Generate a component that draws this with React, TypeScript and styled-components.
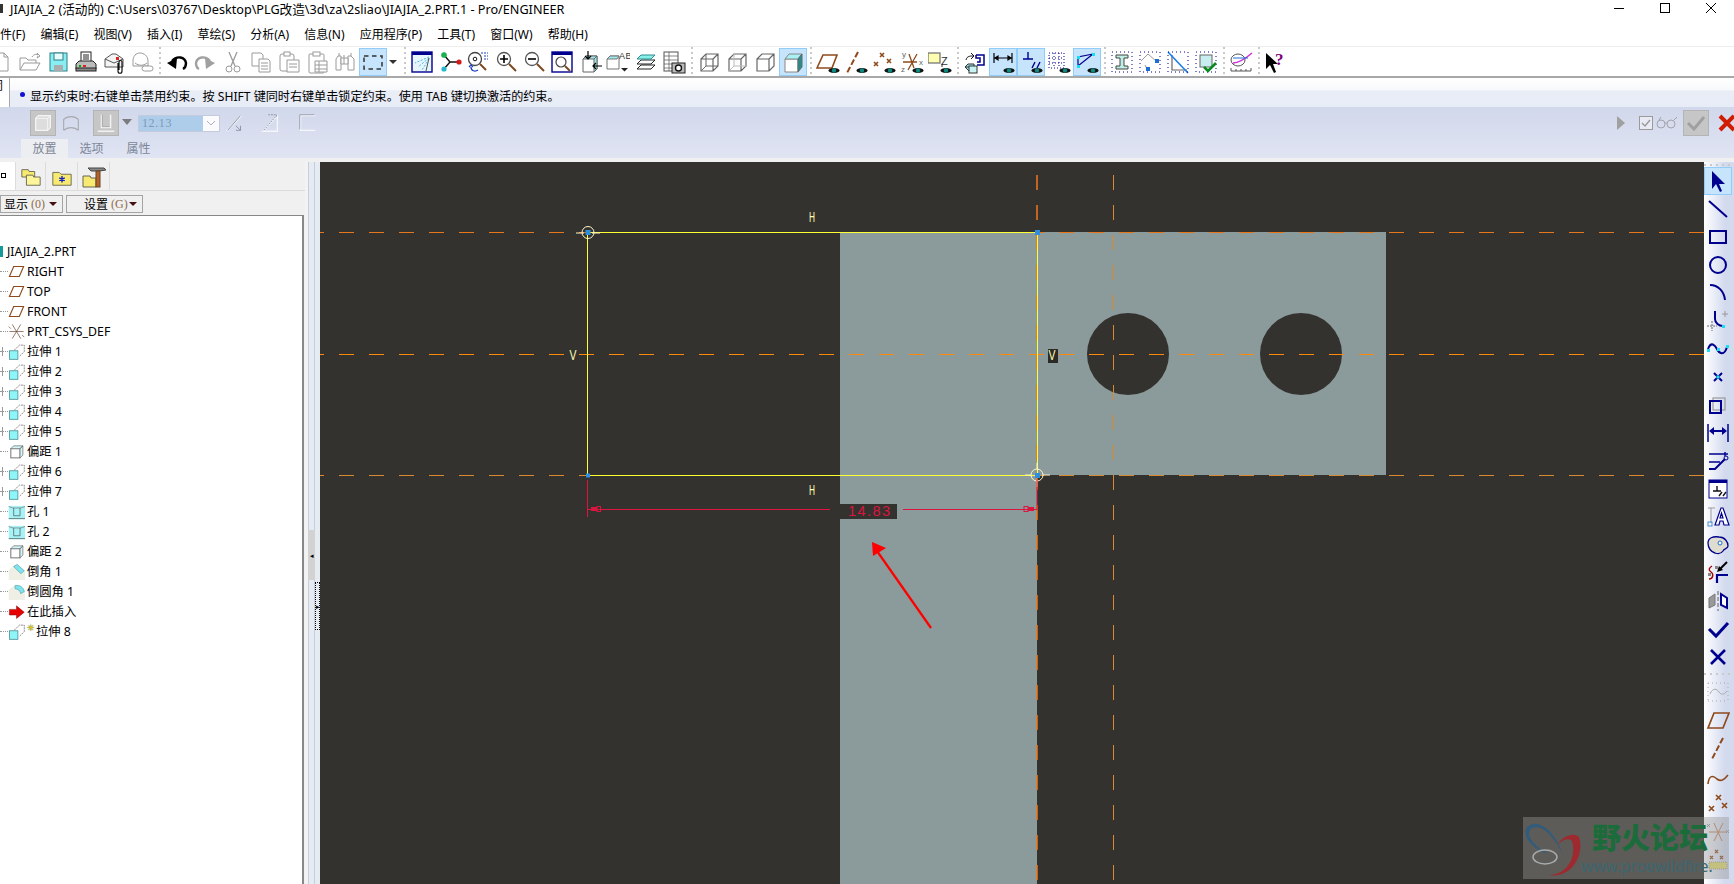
import React from 'react';
import styled, { createGlobalStyle } from 'styled-components';

const GlobalStyle = createGlobalStyle`
  html, body, #root {
    margin: 0;
    padding: 0;
    height: 100%;
    overflow: hidden;
    background: #fff;
  }
  * { box-sizing: border-box; }
`;

const FONT = `"Noto Sans", "Noto Sans CJK SC", sans-serif`;

const Root = styled.div`
  position: relative;
  display: flex;
  flex-direction: column;
  width: 100vw;
  height: 100vh;
  overflow: hidden;
  font-family: ${FONT};
  font-size: 12px;
  color: #000;
`;

const TitleBar = styled.div`
  display: flex;
  align-items: center;
  height: 24px;
  padding: 0 0 8px 10px;
  flex: none;
`;
const TitleMark = styled.span`
  width: 3px;
  height: 9px;
  margin-left: -10px;
  margin-right: 7px;
  background: #333;
`;
const TitleText = styled.span`
  font-size: 12.65px;
  white-space: nowrap;
`;
const WindowButtons = styled.div`
  display: flex;
  margin-left: auto;
`;
const WindowButton = styled.div`
  display: flex;
  align-items: center;
  justify-content: center;
  width: 46px;
  height: 16px;
`;

const MenuBar = styled.div`
  display: flex;
  align-items: center;
  gap: 15.1px;
  height: 22px;
  margin-left: -12px;
  padding-bottom: 2px;
  flex: none;
`;
const MenuItem = styled.span`
  white-space: nowrap;
`;

const ToolBar = styled.div`
  display: flex;
  align-items: center;
  height: 32px;
  border-top: 1px solid #eee;
  border-bottom: 2px solid #a8a8a8;
  flex: none;
  overflow: hidden;
`;
const ToolRow = styled.div`
  display: flex;
  align-items: center;
  margin-left: -12px;
`;
const ToolButton = styled.div<{ $active?: boolean }>`
  display: flex;
  align-items: center;
  justify-content: center;
  width: 28px;
  height: 28px;
  flex: none;
  background: ${(p) => (p.$active ? '#c6e4fc' : 'transparent')};
  box-shadow: ${(p) => (p.$active ? 'inset 0 0 0 1px #92ccf8' : 'none')};
`;
const ToolCaret = styled.div`
  width: 0;
  height: 0;
  border: 4px solid transparent;
  border-top: 4px solid #333;
  border-bottom: none;
  flex: none;
`;
const CaretGap = styled.div`
  display: flex;
  justify-content: center;
  width: 11px;
  margin-right: 3px;
  flex: none;
`;
const Grip = styled.div`
  width: 7px;
  height: 29px;
  flex: none;
  background: repeating-linear-gradient(to bottom, #c9c9c9 0 2px, transparent 2px 5px) center / 2px 100% no-repeat;
`;

const MessageBar = styled.div`
  display: flex;
  align-items: center;
  height: 29px;
  flex: none;
  background: linear-gradient(to bottom, #fff 0%, #f8f9fc 40%, #e9edf6 45%, #e8ecf6 100%);
`;
const MessageStub = styled.div`
  width: 10px;
  height: 100%;
  border-right: 1px solid #a8a8a8;
  background: #fff;
  overflow: hidden;
  line-height: 16px;
  text-indent: -9px;
  flex: none;
`;
const MessageDot = styled.span`
  width: 5px;
  height: 5px;
  margin: 3px 5px 0 10px;
  border-radius: 50%;
  background: #1010d0;
  flex: none;
`;
const MessageText = styled.span`
  font-size: 12.1px;
  white-space: nowrap;
  position: relative;
  top: 3px;
`;

const Dashboard = styled.div`
  height: 51px;
  padding-top: 3px;
  flex: none;
  background: linear-gradient(to bottom, #d1d8eb, #e0e4f3);
`;
const DashRow = styled.div`
  display: flex;
  align-items: center;
  height: 26px;
  padding-left: 30px;
`;
const DashButton = styled.div<{ $pressed?: boolean; $ml?: number }>`
  display: flex;
  align-items: center;
  justify-content: center;
  width: 26px;
  height: 26px;
  margin-left: ${(p) => p.$ml ?? 0}px;
  flex: none;
  background: ${(p) => (p.$pressed ? '#c6c6c6' : 'transparent')};
  box-shadow: ${(p) => (p.$pressed ? 'inset 0 0 0 1px #b4b4b4' : 'none')};
`;
const DashCaret = styled.div`
  width: 0;
  height: 0;
  margin: 0 6px 0 3px;
  border: 5px solid transparent;
  border-top: 6px solid #7c7c80;
  border-bottom: none;
  flex: none;
  position: relative;
  top: -1px;
`;
const ValueBox = styled.div`
  display: flex;
  align-items: center;
  width: 82px;
  height: 17px;
  background: #aecdea;
  border: 1px solid #c4cbdc;
  flex: none;
`;
const ValueText = styled.span`
  flex: 1;
  padding-left: 3px;
  font-family: "Liberation Serif", serif;
  font-size: 12px;
  letter-spacing: 0.6px;
  color: #7d9ab8;
`;
const ValueDrop = styled.div`
  display: flex;
  align-items: center;
  justify-content: center;
  width: 16px;
  height: 100%;
  background: #fbfbfd;
`;
const DashRight = styled.div`
  display: flex;
  align-items: center;
  margin-left: auto;
`;
const DashGlyph = styled.svg<{ $ml?: number; $mr?: number }>`
  margin-left: ${(p) => p.$ml ?? 0}px;
  margin-right: ${(p) => p.$mr ?? 0}px;
  flex: none;
`;
const TabRow = styled.div`
  display: flex;
  height: 19px;
  margin-top: 3px;
  padding-left: 21px;
`;
const Tab = styled.div<{ $active?: boolean }>`
  width: 47px;
  line-height: 19px;
  text-align: center;
  color: #7c8797;
  background: ${(p) => (p.$active ? '#eceef1' : 'transparent')};
`;
const Spacer = styled.div`
  height: 4px;
  flex: none;
  background: #f0f0f0;
`;

const Main = styled.div`
  display: flex;
  flex: 1;
  min-height: 0;
`;

const Sidebar = styled.div`
  display: flex;
  flex-direction: column;
  width: 305px;
  flex: none;
  background: #f0f0f0;
`;
const SideTabs = styled.div`
  display: flex;
  height: 29px;
  flex: none;
  border-bottom: 1px solid #dcdcdc;
`;
const SideTab = styled.div<{ $active?: boolean; $w: number }>`
  display: flex;
  align-items: flex-end;
  justify-content: center;
  width: ${(p) => p.$w}px;
  padding-bottom: 2px;
  background: ${(p) => (p.$active ? '#fff' : 'transparent')};
  border-right: 1px solid #dcdcdc;
`;
const ActiveMark = styled.span`
  width: 5px;
  height: 5px;
  margin: 0 0 10px -8px;
  border: 1px solid #000;
  background: #fff;
`;
const SideButtons = styled.div`
  display: flex;
  gap: 3px;
  height: 24px;
  padding-top: 4px;
  flex: none;
`;
const SideButton = styled.div<{ $w: number }>`
  display: flex;
  align-items: center;
  width: ${(p) => p.$w}px;
  height: 18px;
  padding: 0 0 0 3px;
  background: #f0f0f0;
  border: 1px solid #a4a4a4;
  white-space: nowrap;
`;
const ButtonLabel = styled.span`
  margin-left: 14px;
`;
const ButtonHint = styled.span`
  margin-left: 3px;
  font-family: "Liberation Serif", serif;
  color: #8d6b4a;
`;
const ButtonCaret = styled.span`
  margin-left: auto;
  margin-right: 5px;
  border: 4px solid transparent;
  border-top: 4px solid #401010;
  border-bottom: none;
`;
const TreeBox = styled.div`
  flex: 1;
  min-height: 0;
  padding-top: 25px;
  margin-right: 1px;
  font-size: 12.3px;
  background: #fff;
  border-top: 1px solid #888;
  border-right: 2px solid #888;
`;
const TreeRow = styled.div`
  display: flex;
  align-items: center;
  height: 20px;
`;
const TreeStem = styled.span<{ $tick?: boolean }>`
  position: relative;
  width: 8px;
  height: 1px;
  flex: none;
  border-top: 1px dotted #999;
  &::before {
    content: '';
    display: ${(p) => (p.$tick ? 'block' : 'none')};
    position: absolute;
    left: 0;
    top: -5px;
    width: 2px;
    height: 9px;
    border-right: 1px solid #999;
  }
`;
const TreeIcon = styled.span`
  display: flex;
  justify-content: center;
  width: 17px;
  margin-right: 2px;
  flex: none;
`;
const RootIcon = styled.span`
  width: 3px;
  height: 11px;
  margin-right: 4px;
  background: #159a9c;
  flex: none;
`;
const NewStar = styled.span`
  margin: -7px 1px 0 0;
  font-size: 9px;
  line-height: 9px;
  color: #f0e000;
  text-shadow: 0 0 1px #000;
`;

const Sash = styled.div`
  position: relative;
  width: 15px;
  flex: none;
  background: linear-gradient(to right, #f3f3f3 0 3px, #c3cfde 3px 4px, #e6ebf2 4px 9px, #c3cfde 9px 10px, #e6ebf2 10px 15px);
`;
const SashHandle = styled.div`
  position: absolute;
  top: 368px;
  left: 3px;
  display: flex;
  align-items: center;
  justify-content: center;
  width: 7px;
  height: 50px;
  background: #d2d2d2;
  font-size: 7px;
`;
const SashDots = styled.div`
  position: absolute;
  top: 420px;
  left: 10px;
  display: flex;
  align-items: center;
  justify-content: center;
  width: 5px;
  height: 48px;
  border: 1px dotted #000;
  font-size: 7px;
`;

const Canvas = styled.div`
  flex: 1;
  min-width: 0;
  background: #34322e;
  overflow: hidden;
`;
const CanvasSvg = styled.svg`
  display: block;
  width: 100%;
  height: 100%;
`;

const RightTools = styled.div`
  display: flex;
  flex-direction: column;
  width: 30px;
  flex: none;
  overflow: hidden;
  background: linear-gradient(to right, #fff, #d3daee 70%);
`;
const HGrip = styled.div<{ $h: number }>`
  height: ${(p) => p.$h}px;
  flex: none;
  background: repeating-linear-gradient(to right, #c9c9c9 0 2px, transparent 2px 6px) 0 2px / 100% 2px no-repeat;
`;
const RightButton = styled(ToolButton)`
  flex: none;
`;

const Watermark = styled.div`
  position: absolute;
  right: 5px;
  bottom: 5px;
  width: 206px;
  height: 62px;
  background: rgba(150, 150, 150, 0.42);
  overflow: hidden;
`;
const MarkLogo = styled.svg`
  position: absolute;
  left: 0;
  top: 0;
`;
const MarkName = styled.div`
  position: absolute;
  left: 69px;
  top: 2px;
  font-family: "Noto Sans CJK SC", sans-serif;
  font-size: 29px;
  line-height: 35px;
  font-weight: 900;
  white-space: nowrap;
  color: #1b6c3a;
`;
const MarkUrl = styled.div`
  position: absolute;
  left: 58px;
  top: 38px;
  font-size: 15.5px;
  line-height: 22px;
  white-space: nowrap;
  color: #3c666e;
`;

const Ico = ({ children, size = 24 }: { children: React.ReactNode; size?: number }) => (
  <svg width={size} height={size} viewBox="0 0 24 24" fill="none">
    {children}
  </svg>
);

const Eye = () => (
  <g>
    <ellipse cx="18" cy="20.5" rx="5.5" ry="2.6" fill="#111" />
    <circle cx="18" cy="20.5" r="2.2" fill="#0f8a80" />
  </g>
);

const Mag = ({ sign }: { sign?: string }) => (
  <g>
    <circle cx="10" cy="9" r="6.5" fill="#fff" stroke="#555" strokeWidth="1.3" />
    {sign && <path d={sign} stroke="#000" strokeWidth="1.6" />}
    <path d="M15 14l7 7" stroke="#7a4a20" strokeWidth="2" />
  </g>
);

const gray = '#9a9a9a';
const navy = '#00008f';
const brown = '#8e4a1c';

const icons: Record<string, React.ReactNode> = {
  newDoc: <path d="M6 3h8l4 4v14H6zM14 3v4h4" stroke={gray} fill="#fff" />,
  open: (
    <g stroke={gray} fill="#fff">
      <path d="M2 20V8h6l2 2h8v3" />
      <path d="M2 20l4-7h16l-4 7z" />
      <path d="M14 7c2-3 4-3 6-2l-1-2 3 3-3 2 1-2" />
    </g>
  ),
  save: (
    <g>
      <rect x="4" y="3" width="17" height="18" fill="#88eef2" stroke="#2a7f86" />
      <rect x="8" y="3" width="9" height="7" fill="#e8fbfb" stroke="#2a7f86" />
      <rect x="8" y="15" width="9" height="6" fill="#a9adad" />
    </g>
  ),
  print: (
    <g stroke="#222">
      <rect x="7" y="2" width="10" height="10" fill="#fff" />
      <path d="M9 5h6M9 7h6M9 9h6" />
      <path d="M2 19v-5l3-3h14l3 3v5z" fill="#bbb" />
      <rect x="2" y="18" width="20" height="3" fill="#888" />
      <rect x="5" y="15" width="2" height="2" fill="#0a0" stroke="none" />
      <rect x="9" y="15" width="3" height="2" fill="#d22" stroke="none" />
    </g>
  ),
  mail: (
    <g>
      <path d="M3 9l7-5h4l7 5v8H3z" fill="#f4f4f4" stroke="#555" />
      <path d="M3 9l9 4 9-4" stroke="#555" />
      <rect x="14" y="7" width="3" height="3" fill="#d22" />
      <path d="M16 13v8c0 3 4 3 4 0v-9c0-2-3-2-3 0v8" stroke="#111" strokeWidth="1.2" />
    </g>
  ),
  mailOff: (
    <g stroke={gray} fill="#fff">
      <path d="M3 11c0-5 3-8 7-8s8 3 8 8v5H3z" />
      <path d="M5 13c4 3 8 3 12 0" />
      <rect x="12" y="16" width="11" height="5" rx="2.5" />
    </g>
  ),
  undo: (
    <g>
      <path d="M7 11c5-6 13-4 14 2 0 3-1 5-3 6" stroke="#000" strokeWidth="2.4" />
      <path d="M2 13l10-5-1 11z" fill="#000" />
    </g>
  ),
  redo: (
    <g>
      <path d="M17 11c-5-6-13-4-14 2 0 3 1 5 3 6" stroke="#a0a0a0" strokeWidth="2.4" />
      <path d="M22 13l-10-5 1 11z" fill="#a0a0a0" />
    </g>
  ),
  cut: (
    <g stroke={gray}>
      <path d="M8 2l6 14M16 2l-6 14" strokeWidth="1.3" />
      <circle cx="8" cy="19" r="3" />
      <circle cx="16" cy="19" r="3" />
    </g>
  ),
  copy: (
    <g stroke={gray} fill="#fff">
      <path d="M3 3h9l2 2v11H3z" />
      <path d="M10 9h9l2 2v11H10z" />
      <path d="M12 13h7M12 16h7M12 19h7" />
    </g>
  ),
  paste: (
    <g stroke={gray} fill="#fff">
      <rect x="3" y="4" width="14" height="17" rx="2" />
      <rect x="7" y="2" width="6" height="4" />
      <path d="M10 10h12v12H10zM12 14h8M12 17h8" />
    </g>
  ),
  pasteSpecial: (
    <g stroke={gray} fill="#fff">
      <rect x="4" y="4" width="15" height="19" rx="1" />
      <rect x="8" y="2" width="7" height="4" />
      <path d="M10 11h12v11H10zM14 11v11M10 15h12M10 19h12" />
    </g>
  ),
  binoc: (
    <g stroke={gray} fill="#fff">
      <path d="M3 20V9l2-3h3v14zM15 20V6h3l3 3v11z" />
      <path d="M8 8h7v6H8zM6 3v3M18 3v3M11 5v9" />
    </g>
  ),
  select: <rect x="3" y="6" width="18" height="13" stroke="#333" strokeWidth="1.5" strokeDasharray="4.5 3.5" />,
  sketchView: (
    <g>
      <rect x="2" y="2" width="20" height="20" fill="#e6f6fb" stroke={navy} strokeWidth="1.4" />
      <rect x="2" y="2" width="20" height="3" fill={navy} />
      <path d="M19 7L5 13M19 8L8 17M19 9L12 20" stroke="#4db4e8" strokeDasharray="2 1.5" />
      <path d="M19 8l-3 13" stroke="#555" />
    </g>
  ),
  spin: (
    <g>
      <path d="M12 12L6 5M12 12h9M12 12l-6 7" stroke="#111" strokeWidth="1.4" />
      <circle cx="6" cy="5" r="2.6" fill="#1fb14a" stroke="#0a5" strokeWidth=".5" />
      <circle cx="21" cy="12" r="2.6" fill="#d51a1a" />
      <circle cx="6" cy="19" r="2.6" fill="#26b9cc" />
    </g>
  ),
  zoomBox: (
    <g>
      <circle cx="9" cy="9" r="6.5" fill="#fff" stroke="#444" strokeWidth="1.3" />
      <circle cx="9" cy="9" r="1.8" stroke="#111" />
      <path d="M14 14l6 6" stroke="#7a4a20" strokeWidth="2" />
      <path d="M15 3h7M18 6h4M18 9h4" stroke="#1a3fc0" strokeDasharray="2 1" />
      <path d="M5 17c0 4 4 5 7 3M3 17l2-2 2 2" stroke="#1a3fc0" strokeWidth="1.3" />
    </g>
  ),
  zoomIn: <Mag sign="M6 9h8M10 5v8" />,
  zoomOut: <Mag sign="M6 9h8" />,
  refit: (
    <g>
      <rect x="2" y="2" width="20" height="20" fill="#fff" stroke={navy} strokeWidth="1.4" />
      <rect x="2" y="2" width="20" height="3" fill={navy} />
      <circle cx="11" cy="12" r="5" stroke="#444" strokeWidth="1.2" />
      <path d="M15 16l5 5" stroke="#7a4a20" strokeWidth="2" />
    </g>
  ),
  reorient: (
    <g>
      <path d="M5 9l3-3h11v13l-3 3H5z" fill="#fff" stroke="#666" />
      <path d="M16 9l3-3v13l-3 3zM5 9l3-3h11l-3 3z" fill="#9ee8ee" stroke="#666" />
      <path d="M10 1v8M7 6l3 3 3-3M24 16h-9M18 13l-3 3 3 3" stroke="#000" strokeWidth="1.2" />
    </g>
  ),
  named: (
    <g>
      <path d="M1 9l3-3h9v13H1z" fill="#fff" stroke="#777" />
      <path d="M1 9l3-3h9l-2 3z" fill="#9ee8ee" stroke="#777" />
      <text x="13" y="9" fontFamily="Liberation Sans" fontSize="9" fill="#333" letterSpacing="0.5">AB</text>
      <path d="M15 18h7l-3.5 3.5z" fill="#222" />
    </g>
  ),
  layers: (
    <g stroke="#222">
      <path d="M3 19l4-4h14l-4 4z" fill="#fff" />
      <path d="M3 14l4-4h14l-4 4z" fill="#fff" />
      <path d="M3 9l4-4h14l-4 4z" fill="#88f0e8" stroke="#2a8f90" />
    </g>
  ),
  table: (
    <g stroke="#555">
      <rect x="2" y="2" width="14" height="19" fill="#fff" />
      <path d="M2 6h14M2 10h14M2 14h14M2 18h14M7 2v19" strokeWidth=".7" />
      <rect x="10" y="13" width="13" height="10" fill="#bbb" stroke="#222" />
      <circle cx="16.5" cy="18" r="3" fill="#fff" stroke="#111" strokeWidth="1.4" />
    </g>
  ),
  wire: (
    <g stroke="#666">
      <path d="M4 9l5-5h12v12l-5 5H4zM4 9h12v12M16 9l5-5" strokeWidth="1.2" />
      <path d="M9 4v12H21M9 16l-5 5" strokeWidth="1" />
    </g>
  ),
  wireThin: (
    <g stroke="#666">
      <path d="M4 9l5-5h12v12l-5 5H4zM4 9h12v12M16 9l5-5" strokeWidth="1.2" />
      <path d="M9 4v12H21M9 16l-5 5" stroke="#bbb" strokeWidth="1" />
    </g>
  ),
  hidden: <path d="M4 9l5-5h12v12l-5 5H4zM4 9h12v12M16 9l5-5" stroke="#666" strokeWidth="1.2" />,
  shaded: (
    <g>
      <path d="M4 9h13v13H4z" fill="#fff" stroke="#888" />
      <path d="M4 9l4-5h13l-4 5z" fill="#a8f2f5" stroke="#888" />
      <path d="M17 9l4-5v13l-4 5z" fill="#23908f" stroke="#666" />
    </g>
  ),
  planeEye: (
    <g>
      <path d="M1 18L7 5h14l-5 13z" stroke={brown} strokeWidth="1.6" />
      <Eye />
    </g>
  ),
  axisEye: (
    <g>
      <path d="M14 2L3 23" stroke={brown} strokeWidth="2" strokeDasharray="6 2.5" />
      <Eye />
    </g>
  ),
  pointsEye: (
    <g>
      <path d="M8 3l4 4M12 3L8 7M2 12l4 4M6 12l-4 4M15 9l4 4M19 9l-4 4" stroke={brown} strokeWidth="1.6" />
      <Eye />
    </g>
  ),
  csysEye: (
    <g>
      <path d="M3 12h14M8 20L17 4M9 4l5 14" stroke={brown} strokeWidth="1.3" />
      <text x="2" y="7" fontFamily="Liberation Sans" fontSize="8" fill="#666">y</text>
      <text x="19" y="15" fontFamily="Liberation Sans" fontSize="8" fill="#666">x</text>
      <text x="1" y="22" fontFamily="Liberation Sans" fontSize="8" fill="#666">z</text>
      <Eye />
    </g>
  ),
  noteEye: (
    <g>
      <rect x="0" y="3" width="12" height="10" fill="#ffffb0" stroke="#777" strokeWidth="1.3" />
      <text x="13" y="15" fontFamily="Liberation Sans" fontSize="11" fill="#333">Z</text>
      <path d="M14 14v3" stroke="#333" />
      <Eye />
    </g>
  ),
  relate: (
    <g>
      <path d="M2 17h6l5 5H7zM2 17l3-3h6v8" fill="#9ee8ee" stroke="#333" />
      <rect x="6" y="16" width="8" height="7" fill="#c7f3f5" stroke="#333" />
      <path d="M13 5h8v10h-7M13 5v3h4v4h-3" stroke={navy} strokeWidth="1.5" />
      <path d="M3 10c1-4 4-4 7-4M8 3l3 3-3 3" stroke="#111" />
    </g>
  ),
  dimEye: (
    <g>
      <path d="M3 3v10M21 3v10M4 8h16M4 8l3-2v4zM20 8l-3-2v4z" stroke="#000" strokeWidth="1.2" />
      <Eye />
    </g>
  ),
  constrEye: (
    <g>
      <path d="M4 9h10M9 2v7" stroke={navy} strokeWidth="1.4" />
      <path d="M13 18l3-6M18 18l3-6" stroke={navy} strokeWidth="1.4" />
      <Eye />
    </g>
  ),
  gridEye: (
    <g>
      <rect x="2" y="3" width="15" height="15" stroke={navy} strokeDasharray="1 2" />
      <path d="M7 3v15M12 3v15M2 8h15M2 13h15" stroke={navy} strokeDasharray="1 2" />
      <Eye />
    </g>
  ),
  verticesEye: (
    <g>
      <path d="M3 16V7l15-3z" stroke={navy} strokeWidth="1.2" />
      <path d="M2 6h3v3H2zM17 3h3v3h-3zM2 15h3v3H2z" fill="#19e0f0" />
      <Eye />
    </g>
  ),
  ibeam: (
    <g>
      <path d="M6 5h12v3h-4v8h4v3H6v-3h4V8H6z" fill="#bfeee5" stroke="#444" />
      <rect x="2" y="2" width="20" height="20" stroke={navy} strokeDasharray="1 3" />
    </g>
  ),
  rhomb: (
    <g>
      <path d="M3 11l7-7 8 7M7 15l3 6" stroke={gray} />
      <rect x="2" y="2" width="20" height="20" stroke={navy} strokeDasharray="1 3" />
      <rect x="17" y="9" width="4" height="4" fill="#1a6fd0" />
      <rect x="8" y="17" width="4" height="4" fill="#1a6fd0" />
    </g>
  ),
  slash: (
    <g>
      <path d="M6 5v15h15" stroke="#666" strokeWidth="1.2" />
      <path d="M2 2l20 21" stroke="#1a7fe8" strokeWidth="1.6" />
      <rect x="2" y="2" width="20" height="20" stroke={navy} strokeDasharray="1 3" />
    </g>
  ),
  cubeCheck: (
    <g>
      <rect x="6" y="5" width="12" height="12" fill="#c9eef2" stroke="#666" />
      <rect x="2" y="2" width="20" height="20" stroke={navy} strokeDasharray="1 3" />
      <path d="M10 17l4 4 8-8" stroke="#0a8a20" strokeWidth="2.6" />
    </g>
  ),
  analysis: (
    <g>
      <ellipse cx="9" cy="10" rx="7" ry="6" stroke="#555" />
      <path d="M4 13c6 0 12-4 19-10" stroke="#d030d8" strokeWidth="1.5" />
      <path d="M4 8h15" stroke="#1a6fd0" />
      <path d="M2 21h20v-3M2 21v-3M7 21v-2M12 21v-2M17 21v-2" stroke="#555" />
    </g>
  ),
  help: (
    <g>
      <path d="M2 3v16l4-4 4 8 2-1-3-8h5z" fill="#000" />
      <text x="11" y="15" fontFamily="Liberation Serif" fontWeight="700" fontSize="17" fill="#80007f">?</text>
    </g>
  ),
  arrow: <path d="M6 2v18l4-5 4 8 2-1-3-7h6z" fill={navy} />,
  line: <path d="M3 4l18 16" stroke={navy} strokeWidth="2" />,
  rect: <rect x="4" y="6" width="16" height="12" stroke={navy} strokeWidth="2" />,
  circle: <circle cx="12" cy="12" r="8" stroke={navy} strokeWidth="2" />,
  arc: <path d="M4 4c8 0 14 6 15 15" stroke={navy} strokeWidth="2" />,
  fillet: (
    <g>
      <path d="M9 2v8c0 4 4 7 8 7" stroke={navy} strokeWidth="2" />
      <rect x="16" y="16" width="3" height="3" fill="#19e0f0" />
      <path d="M19 2v6M16 5h6" stroke={gray} />
      <path d="M6 12v10M1 17h10" stroke={gray} strokeDasharray="2 1" strokeWidth="1.6" />
    </g>
  ),
  spline: (
    <g>
      <path d="M2 12c3-8 7-4 9 0s7 8 10-2" stroke={navy} strokeWidth="2" />
      <path d="M1 12h3v3H1zM11 11h3v3h-3zM20 8h3v3h-3z" fill="#19e0f0" />
    </g>
  ),
  point: (
    <g>
      <path d="M8 8l8 8M16 8l-8 8" stroke={navy} strokeWidth="2" />
      <rect x="10.5" y="10.5" width="3" height="3" fill="#19e0f0" />
    </g>
  ),
  offset: (
    <g>
      <rect x="7" y="5" width="12" height="12" stroke={gray} strokeWidth="1.2" />
      <path d="M4 8h11v12H4z" stroke={navy} strokeWidth="2" />
    </g>
  ),
  dim: (
    <g>
      <path d="M2 3v18M22 3v18" stroke={navy} strokeWidth="1.5" />
      <path d="M5 10h14" stroke={navy} strokeWidth="2" />
      <path d="M3 10l5-4v8zM21 10l-5-4v8z" fill={navy} />
    </g>
  ),
  modify: (
    <g>
      <path d="M3 5h19M3 13h11M19 3v4" stroke={navy} strokeWidth="1.4" />
      <path d="M3 20h6l10-10" stroke={navy} strokeWidth="2" />
      <circle cx="20" cy="9" r="2" stroke={navy} />
    </g>
  ),
  constr: (
    <g>
      <rect x="3" y="3" width="18" height="18" fill="#fff" stroke={navy} />
      <rect x="3" y="3" width="18" height="3" fill={navy} />
      <path d="M7 14h8M11 9v5M13 19l3-4M17 19l3-4" stroke="#111" strokeWidth="1.4" />
    </g>
  ),
  textA: (
    <g>
      <path d="M2 3h7M5 3v15" stroke={gray} />
      <path d="M9 20L15 3h2l6 17h-5l-1-4h-3l-1 4zM14 13h3l-1.5-5z" fill="#fff" stroke={navy} strokeWidth="1.2" />
      <rect x="2" y="17" width="4" height="4" stroke="#4a90d0" />
    </g>
  ),
  palette: (
    <g>
      <path d="M2 10c0-5 5-7 11-6 6 0 9 5 9 9 0 3-4 2-5 5-2 3-5 3-8 2-4-1-7-5-7-10z" fill="#dfdcd0" stroke={navy} strokeWidth="1.3" />
      <circle cx="14" cy="10" r="2" fill="#fff" stroke="#1a6fd0" />
    </g>
  ),
  trim: (
    <g>
      <path d="M6 5c-3 2-4 4-1 6s2 7-2 7" stroke="#a00" strokeWidth="1.4" />
      <rect x="9" y="5" width="3" height="3" fill="#888" />
      <rect x="2" y="12" width="3" height="3" fill="#888" />
      <path d="M11 22V14h11" stroke={navy} strokeWidth="2.2" />
      <path d="M21 1l-7 7" stroke="#000" strokeWidth="2" />
      <path d="M11 11l2-6 4 4z" fill="#000" />
    </g>
  ),
  mirror: (
    <g>
      <path d="M12 2v20" stroke="#777" strokeWidth="1.2" strokeDasharray="4 2" />
      <path d="M9 5L3 9v10l6-3z" fill="#999" stroke="#777" />
      <path d="M15 5l6 4v10l-6-3z" fill="#fff" stroke={navy} strokeWidth="2" />
    </g>
  ),
  ok: <path d="M3 12l7 7L22 6" stroke={navy} strokeWidth="3" />,
  cancel: <path d="M5 5l14 14M19 5L5 19" stroke={navy} strokeWidth="2.6" />,
  dtm: (
    <g stroke="#aaa">
      <path d="M2 3h20M2 21h20M2 3v18M22 3v18" strokeDasharray="1 3" />
      <path d="M4 14c3-7 7-5 9-2s5 3 8-1" />
    </g>
  ),
  plane: <path d="M2 20L8 5h15l-6 15z" stroke={brown} strokeWidth="1.7" />,
  axis: <path d="M17 2L6 23" stroke={brown} strokeWidth="2" strokeDasharray="6 2.5" />,
  curve: <path d="M2 20c1-9 5-9 9-5 4 3 7 1 11-4" stroke={brown} strokeWidth="1.6" />,
  points: <path d="M10 3l5 5M15 3l-5 5M3 14l5 5M8 14l-5 5M16 11l5 5M21 11l-5 5" stroke={brown} strokeWidth="1.6" />,
  csys: (
    <g>
      <path d="M3 12h18M8 21L17 3M8 3l8 18" stroke="#c4865c" />
      <path d="M1 4l3 3M4 4L1 7M20 10l3 3M23 10l-3 3" stroke={gray} />
    </g>
  ),
  ptsPlane: (
    <g>
      <rect x="3" y="14" width="18" height="7" fill="#e6e070" stroke="#999" strokeDasharray="1 1" />
      <path d="M9 2l3 3M12 2L9 5M4 8l3 3M7 8l-3 3M14 8l3 3M17 8l-3 3" stroke={brown} strokeWidth="1.3" />
    </g>
  ),
};

// tree icons
const TreeGlyph: Record<string, React.ReactNode> = {
  plane: <path d="M2 19L8 5h14l-6 14z" stroke={brown} strokeWidth="1.6" />,
  csys: <path d="M2 12h20M6 22L18 2M6 2l12 20M1 5l3 3M20 17l3 3" stroke="#6e4a34" strokeWidth="1" />,
  extrude: (
    <g>
      <path d="M9 10l7-7h7v9l-7 7" stroke="#666" strokeDasharray="3 1" />
      <rect x="2" y="11" width="12" height="12" fill="#8ef5f8" stroke="#3f7f86" />
    </g>
  ),
  offset: (
    <g stroke="#6a6a6a">
      <rect x="4" y="8" width="13" height="13" fill="#fff" strokeWidth="1.3" />
      <path d="M4 8l4-4h13l-4 4zM17 8l4-4v13l-4 4z" fill="#d3f5f7" />
    </g>
  ),
  hole: (
    <g>
      <rect x="1" y="4" width="23" height="19" fill="#a5f3f7" />
      <path d="M1 5l6 2h11l6-2" stroke="#777" />
      <path d="M8 7v11h9V7M1 22h23" stroke="#555" />
    </g>
  ),
  chamfer: (
    <g>
      <path d="M1 10L10 2l5 2 9 8v12H1z" fill="#efefe6" />
      <path d="M8 5l5-3 10 9-5 4z" fill="#7fe3f0" stroke="#5aa" />
    </g>
  ),
  round: (
    <g>
      <path d="M1 10L10 2l5 2 9 8v12H1z" fill="#efefe6" />
      <path d="M10 4c6-2 12 2 13 8l-5 3C17 11 14 8 10 8z" fill="#7fe3f0" stroke="#5aa" />
    </g>
  ),
  insert: <path d="M2 9h10V4l11 9-11 9v-5H2z" fill="#e80000" stroke="#600" strokeWidth=".6" />,
};

const toolGroups: { name: string; active?: boolean }[][] = [
  [{ name: 'newDoc' }, { name: 'open' }, { name: 'save' }, { name: 'print' }, { name: 'mail' }, { name: 'mailOff' }],
  [
    { name: 'undo' }, { name: 'redo' }, { name: 'cut' }, { name: 'copy' }, { name: 'paste' },
    { name: 'pasteSpecial' }, { name: 'binoc' }, { name: 'select', active: true },
  ],
  [
    { name: 'sketchView' }, { name: 'spin' }, { name: 'zoomBox' }, { name: 'zoomIn' }, { name: 'zoomOut' },
    { name: 'refit' }, { name: 'reorient' }, { name: 'named' }, { name: 'layers' }, { name: 'table' },
  ],
  [{ name: 'wire' }, { name: 'wireThin' }, { name: 'hidden' }, { name: 'shaded', active: true }],
  [{ name: 'planeEye' }, { name: 'axisEye' }, { name: 'pointsEye' }, { name: 'csysEye' }, { name: 'noteEye' }],
  [
    { name: 'relate' }, { name: 'dimEye', active: true }, { name: 'constrEye', active: true },
    { name: 'gridEye' }, { name: 'verticesEye', active: true },
  ],
  [{ name: 'ibeam' }, { name: 'rhomb' }, { name: 'slash' }, { name: 'cubeCheck' }],
  [{ name: 'analysis' }],
  [{ name: 'help' }],
];

const menus = ['文件(F)', '编辑(E)', '视图(V)', '插入(I)', '草绘(S)', '分析(A)', '信息(N)', '应用程序(P)', '工具(T)', '窗口(W)', '帮助(H)'];

const sketchTools = [
  'arrow', 'line', 'rect', 'circle', 'arc', 'fillet', 'spline', 'point', 'offset',
  'dim', 'modify', 'constr', 'textA', 'palette', 'trim', 'mirror', 'ok', 'cancel',
];
const datumTools = ['dtm', 'plane', 'axis', 'curve', 'points', 'csys', 'ptsPlane'];

const tree: { icon: string; label: string; isNew?: boolean; tick?: boolean }[] = [
  { icon: 'plane', label: 'RIGHT' },
  { icon: 'plane', label: 'TOP' },
  { icon: 'plane', label: 'FRONT' },
  { icon: 'csys', label: 'PRT_CSYS_DEF' },
  { icon: 'extrude', label: '拉伸 1', tick: true },
  { icon: 'extrude', label: '拉伸 2', tick: true },
  { icon: 'extrude', label: '拉伸 3', tick: true },
  { icon: 'extrude', label: '拉伸 4', tick: true },
  { icon: 'extrude', label: '拉伸 5', tick: true },
  { icon: 'offset', label: '偏距 1' },
  { icon: 'extrude', label: '拉伸 6', tick: true },
  { icon: 'extrude', label: '拉伸 7', tick: true },
  { icon: 'hole', label: '孔 1' },
  { icon: 'hole', label: '孔 2' },
  { icon: 'offset', label: '偏距 2' },
  { icon: 'chamfer', label: '倒角 1' },
  { icon: 'round', label: '倒圆角 1' },
  { icon: 'insert', label: '在此插入' },
  { icon: 'extrude', label: '拉伸 8', isNew: true },
];

const ORANGE = '#ff8a0a';
const YELLOW = '#ffff33';
const LABEL = '#ffffb4';
const DIM = '#dc1440';

const SketchView = () => (
  // page coordinates, so the drawing reads the same as the screenshot
  <CanvasSvg viewBox="320 162 1384 722" preserveAspectRatio="xMinYMin slice">
    <rect x="840" y="232" width="546" height="243" fill="#8b9a9a" />
    <rect x="840" y="475" width="197" height="409" fill="#8b9a9a" />
    <circle cx="1128" cy="354" r="41" fill="#34322e" />
    <circle cx="1301" cy="354" r="41" fill="#34322e" />

    <g stroke={ORANGE} strokeWidth="1" strokeDasharray="15 15" strokeDashoffset="11">
      <path d="M320 232.5H1704" stroke="#e8761a" />
      <path d="M320 354.5H1704" />
      <path d="M320 475.5H1704" stroke="#d98a30" />
    </g>
    <g stroke={ORANGE} strokeWidth="1" strokeDasharray="15 15" strokeDashoffset="17">
      <path d="M1037 162V884" stroke="#f0781e" strokeWidth="1.5" />
      <path d="M1113.5 162V884" stroke="#d98a30" />
    </g>

    <rect x="1048" y="349" width="10" height="14" fill="#2c2a27" />
    <g fontFamily="Liberation Sans, sans-serif" fontSize="15" fill={LABEL} textAnchor="middle">
      <text x="812" y="222" textLength="6" lengthAdjust="spacingAndGlyphs">H</text>
      <text x="812" y="495" textLength="6" lengthAdjust="spacingAndGlyphs">H</text>
      <text x="573" y="360" textLength="7" lengthAdjust="spacingAndGlyphs">V</text>
      <text x="1052" y="360" textLength="7" lengthAdjust="spacingAndGlyphs">V</text>
    </g>

    <path d="M587.5 232.5H1037.5V475.5H587.5Z" stroke={YELLOW} strokeWidth="1" fill="none" />
    <g stroke="#fff8c8" strokeWidth="1" fill="none">
      <circle cx="588" cy="232.5" r="6" />
      <circle cx="1037" cy="475" r="6" />
      <path d="M576 233H584M592 233H600M1025 475H1031M1043 475H1050M1037 463V469M1037 481V487" />
    </g>
    <g fill="#2e8fe0">
      <rect x="585.5" y="230" width="5" height="5" />
      <rect x="1035" y="230" width="5" height="5" />
      <rect x="586" y="473.5" width="4" height="4" />
      <rect x="1035" y="473" width="5" height="5" />
    </g>

    <g stroke={DIM} strokeWidth="1" fill="none">
      <path d="M587.5 480V517M1037 480V510" />
      <path d="M588 509.5H830M903 509.5H1037" />
      <rect x="597" y="506.5" width="3.5" height="5" />
      <rect x="1024" y="506.5" width="4" height="5" />
    </g>
    <rect x="591" y="507" width="6" height="4" fill={DIM} />
    <rect x="1028" y="507" width="6" height="4" fill={DIM} />
    <rect x="840" y="504" width="57" height="15" fill="#34322e" />
    <text x="848" y="516" fontFamily="Liberation Sans, sans-serif" fontSize="14.5" fill={DIM} textLength="42">
      14.83
    </text>

    <path d="M931 628L877 551" stroke="#ff0000" strokeWidth="2.2" />
    <path d="M872 542L886 548L873 556Z" fill="#ff0000" />
  </CanvasSvg>
);

export default function App() {
  return (
    <Root>
      <GlobalStyle />
      <TitleBar>
        <TitleMark />
        <TitleText>JIAJIA_2 (活动的) C:\Users\03767\Desktop\PLG改造\3d\za\2sliao\JIAJIA_2.PRT.1 - Pro/ENGINEER</TitleText>
        <WindowButtons>
          <WindowButton>
            <svg width="12" height="12" viewBox="0 0 12 12"><path d="M1 6.5h10" stroke="#000" /></svg>
          </WindowButton>
          <WindowButton>
            <svg width="12" height="12" viewBox="0 0 12 12"><rect x="1.5" y="1.5" width="9" height="9" stroke="#000" fill="none" /></svg>
          </WindowButton>
          <WindowButton>
            <svg width="12" height="12" viewBox="0 0 12 12"><path d="M1 1l10 10M11 1L1 11" stroke="#000" /></svg>
          </WindowButton>
        </WindowButtons>
      </TitleBar>

      <MenuBar>
        {menus.map((m) => (
          <MenuItem key={m}>{m}</MenuItem>
        ))}
      </MenuBar>

      <ToolBar>
        <ToolRow>
          {toolGroups.map((group, i) => (
            <React.Fragment key={i}>
              {i > 0 && <Grip />}
              {group.map((t) => (
                <ToolButton key={t.name} $active={t.active}>
                  <Ico>{icons[t.name]}</Ico>
                </ToolButton>
              ))}
              {i === 1 && (
                <CaretGap>
                  <ToolCaret />
                </CaretGap>
              )}
            </React.Fragment>
          ))}
        </ToolRow>
      </ToolBar>

      <MessageBar>
        <MessageStub>闭</MessageStub>
        <MessageDot />
        <MessageText>显示约束时:右键单击禁用约束。按 SHIFT 键同时右键单击锁定约束。使用 TAB 键切换激活的约束。</MessageText>
      </MessageBar>

      <Dashboard>
        <DashRow>
          <DashButton $pressed>
            <Ico size={22}>
              <path d="M4 7l3-3h13v13l-3 3H4z" fill="#ddd" stroke="#f4f4f4" strokeWidth="1.4" />
              <path d="M4 7h13v13M17 7l3-3" stroke="#f4f4f4" />
            </Ico>
          </DashButton>
          <DashButton $ml={2}>
            <Ico size={22}>
              <path d="M4 20V8c4-4 12-4 16 0v12M4 20c4-4 12-4 16 0" stroke="#a8aab0" strokeWidth="1.2" />
            </Ico>
          </DashButton>
          <DashButton $pressed $ml={9}>
            <Ico size={22}>
              <path d="M3 21h18M7 3v14h10V3" stroke="#f2f2f2" strokeWidth="1.6" />
              <path d="M8 3v13h8" stroke="#8a8a8a" strokeWidth=".6" />
            </Ico>
          </DashButton>
          <DashCaret />
          <ValueBox>
            <ValueText>12.13</ValueText>
            <ValueDrop>
              <svg width="10" height="8" viewBox="0 0 10 8"><path d="M1 2l4 4 4-4" stroke="#a8b2c0" fill="none" /></svg>
            </ValueDrop>
          </ValueBox>
          <DashButton $ml={2}>
            <Ico size={22}>
              <path d="M3 21L19 4" stroke="#f4f6fb" strokeWidth="1.6" />
              <path d="M4 20L18 4" stroke="#8c90a0" />
              <path d="M13 15l5 5m0-5v5h-5" stroke="#8c90a0" />
            </Ico>
          </DashButton>
          <DashButton $ml={10}>
            <Ico size={22}>
              <path d="M3 21L19 4v17z" stroke="#f4f6fb" strokeWidth="1.5" />
              <path d="M4 20L18 4M9 3h9v3" stroke="#8c90a0" strokeDasharray="2 1" />
            </Ico>
          </DashButton>
          <DashButton $ml={11}>
            <Ico size={22}>
              <path d="M20 4H4v16h16" stroke="#f4f6fb" strokeWidth="1.4" />
              <path d="M19 3H3v16" stroke="#9a9ca8" />
            </Ico>
          </DashButton>
          <DashRight>
            <DashGlyph width="12" height="16" viewBox="0 0 12 16"><path d="M2 1l8 7-8 7z" fill="#a0a0a0" /></DashGlyph>
            <DashGlyph width="14" height="14" viewBox="0 0 14 14" $ml={12}>
              <rect x=".5" y=".5" width="13" height="13" fill="#e8ebf3" stroke="#9a9a9a" />
              <path d="M3 7l3 3 5-6" stroke="#999" strokeWidth="1.4" fill="none" />
            </DashGlyph>
            <DashGlyph width="22" height="14" viewBox="0 0 22 14" $ml={3} $mr={5}>
              <g stroke="#a0a4ac" fill="none">
                <circle cx="5" cy="8" r="4" />
                <circle cx="15" cy="8" r="4" />
                <path d="M9 7h2M3 4l2-3M18 4l3-3" />
              </g>
            </DashGlyph>
            <DashButton $pressed>
              <svg width="20" height="16" viewBox="0 0 20 16">
                <path d="M2 8l6 6L18 2" stroke="#a0a0a0" strokeWidth="3" fill="none" />
              </svg>
            </DashButton>
            <DashGlyph width="20" height="18" viewBox="0 0 20 18" $ml={8} $mr={-3}>
              <path d="M3 2l14 14M17 2L3 16" stroke="#d01c00" strokeWidth="4" />
            </DashGlyph>
          </DashRight>
        </DashRow>
        <TabRow>
          <Tab $active>放置</Tab>
          <Tab>选项</Tab>
          <Tab>属性</Tab>
        </TabRow>
      </Dashboard>
      <Spacer />

      <Main>
        <Sidebar>
          <SideTabs>
            <SideTab $active $w={16}>
              <ActiveMark />
            </SideTab>
            <SideTab $w={30}>
              <Ico size={22}>
                <path d="M2 4h7l1 2h6v6H2z" fill="#f8ea70" stroke="#665" />
                <path d="M7 10h7l1 2h7v9H7z" fill="#fdf59a" stroke="#665" />
              </Ico>
            </SideTab>
            <SideTab $w={32}>
              <Ico size={22}>
                <path d="M2 7h7l2 2h11v12H2z" fill="#f8ea70" stroke="#665" />
                <path d="M12 11v7M9 13l6 3M15 13l-6 3" stroke="#1420c8" strokeWidth="1.5" />
              </Ico>
            </SideTab>
            <SideTab $w={32}>
              <Ico size={24}>
                <path d="M1 12h7l1 2h5v9H1z" fill="#f8ea70" stroke="#665" />
                <path d="M6 4h16l2 2-7 1H9z" fill="#888" stroke="#444" />
                <rect x="14" y="7" width="4" height="16" fill="#b4622a" stroke="#642" />
              </Ico>
            </SideTab>
          </SideTabs>
          <SideButtons>
            <SideButton $w={63}>
              显示<ButtonHint>(0)</ButtonHint>
              <ButtonCaret />
            </SideButton>
            <SideButton $w={77}>
              <ButtonLabel>设置</ButtonLabel>
              <ButtonHint>(G)</ButtonHint>
              <ButtonCaret />
            </SideButton>
          </SideButtons>
          <TreeBox>
            <TreeRow>
              <RootIcon />
              JIAJIA_2.PRT
            </TreeRow>
            {tree.map((row) => (
              <TreeRow key={row.label}>
                <TreeStem $tick={row.tick} />
                <TreeIcon>
                  <Ico size={17}>{TreeGlyph[row.icon]}</Ico>
                </TreeIcon>
                {row.isNew && <NewStar>✳</NewStar>}
                {row.label}
              </TreeRow>
            ))}
          </TreeBox>
        </Sidebar>

        <Sash>
          <SashHandle>◂</SashHandle>
          <SashDots>▸</SashDots>
        </Sash>

        <Canvas>
          <SketchView />
        </Canvas>

        <RightTools>
          <HGrip $h={5} />
          {sketchTools.map((name, i) => (
            <RightButton key={name} $active={i === 0}>
              <Ico>{icons[name]}</Ico>
            </RightButton>
          ))}
          <HGrip $h={7} />
          {datumTools.map((name) => (
            <RightButton key={name}>
              <Ico>{icons[name]}</Ico>
            </RightButton>
          ))}
        </RightTools>
      </Main>

      <Watermark>
        <MarkLogo width="62" height="62" viewBox="0 0 62 62">
          <path d="M3 12C8 2 28 4 40 38 30 16 16 6 8 12 3 17 8 28 26 37 12 33 0 22 3 12z" fill="#2c5a80" opacity=".85" />
          <path d="M56 20c6 18-8 42-30 38 18 0 28-18 23-34-3-3-8-2-14 3 5-8 16-12 21-7z" fill="#a5242a" opacity=".9" />
          <ellipse cx="22" cy="40" rx="12" ry="7" stroke="#c4ccd0" strokeWidth="1.5" fill="none" opacity=".7" />
        </MarkLogo>
        <MarkName>野火论坛</MarkName>
        <MarkUrl>www.proewildfire.</MarkUrl>
      </Watermark>
    </Root>
  );
}
